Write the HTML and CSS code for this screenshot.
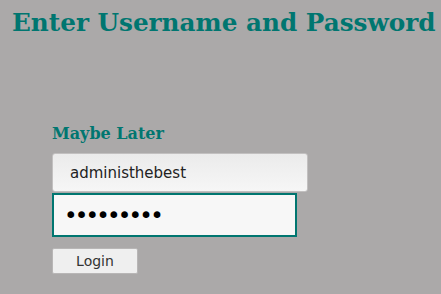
FILE: index.html
```html
<!DOCTYPE html>
<html lang="en">
<head>
  <meta charset="UTF-8" />
  <title>Login</title>
  <link rel="stylesheet" href="styles.css">
</head>
<body>
  <h1 class="title">Enter Username and Password</h1>

  <form class="login-form">
    <div class="later">Maybe Later</div>
    <input class="field username" type="text" value="administhebest" />
    <input class="field password" type="password" value="123456789" />
    <button class="login-btn" type="button">Login</button>
  </form>
</body>
</html>
```

FILE: styles.css
```css
:root {
  --teal: #007670;
  --bg: #aba9a9;
}

* {
  box-sizing: border-box;
  margin: 0;
  padding: 0;
}

body {
  background-color: var(--bg);
  font-family: "DejaVu Sans", sans-serif;
  padding: 8px 12px;
}

.title {
  font-family: "DejaVu Serif", serif;
  font-weight: bold;
  font-size: 24.7px;
  color: var(--teal);
  line-height: 30px;
  white-space: nowrap;
}

.login-form {
  display: flex;
  flex-direction: column;
  align-items: flex-start;
  margin: 86px 0 0 40px;
}

.later {
  font-family: "DejaVu Serif", serif;
  font-weight: bold;
  font-size: 16px;
  color: var(--teal);
  line-height: 20px;
  margin-bottom: 9px;
}

.field {
  font-family: "DejaVu Sans", sans-serif;
  font-size: 15px;
  color: #222;
  outline: none;
}

.username {
  width: 256px;
  height: 39px;
  padding: 0 17px;
  border: 1px solid #c2c0c0;
  border-radius: 3px;
  background: linear-gradient(#ebebeb, #f6f6f6);
  margin-bottom: 1px;
}

.password {
  width: 245px;
  height: 44px;
  padding: 0 10px;
  border: 2px solid var(--teal);
  background-color: #f7f7f7;
  font-size: 23px;
  letter-spacing: -2.8px;
  color: #000;
}

.login-btn {
  margin-top: 11px;
  width: 86px;
  height: 26px;
  font-family: "DejaVu Sans", sans-serif;
  font-size: 14px;
  color: #333;
  background-color: #efefef;
  border: 1px solid #b8b6b6;
  border-radius: 2px;
}
```
